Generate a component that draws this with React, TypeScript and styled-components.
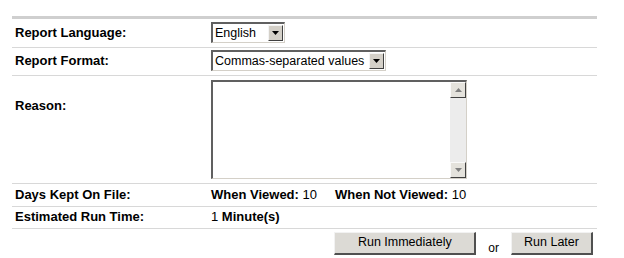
import React from "react";
import styled, { createGlobalStyle } from "styled-components";

const Global = createGlobalStyle`
  html, body { margin: 0; padding: 0; background: #fff; }
  body { font-family: "Liberation Sans", Arial, sans-serif; color: #000; }
`;

const Page = styled.div`
  padding: 16px 27px 0 12px;
  width: 585px;
`;

const Form = styled.div`
  border-top: 3px solid #cfcfcf;
`;

const Row = styled.div<{ $h: number; $top?: boolean }>`
  display: grid;
  grid-template-columns: 199px 1fr;
  align-items: ${(p) => (p.$top ? "start" : "center")};
  height: ${(p) => p.$h}px;
  box-sizing: border-box;
  border-bottom: 1px solid #d8d8d8;
  padding-bottom: ${(p) => (p.$top ? 0 : 2)}px;
`;

const Label = styled.div<{ $pt?: number }>`
  padding-left: 3px;
  padding-top: ${(p) => p.$pt ?? 0}px;
  font-size: 13px;
  font-weight: bold;
  white-space: nowrap;
`;

const Value = styled.div`
  font-size: 13px;
  display: flex;
  align-items: center;
  white-space: nowrap;
`;

const Select = styled.div<{ $w: number }>`
  width: ${(p) => p.$w}px;
  height: 21px;
  box-sizing: border-box;
  border-top: 2px solid #606060;
  border-left: 2px solid #606060;
  border-right: 1px solid #d4d0c8;
  border-bottom: 1px solid #d4d0c8;
  display: flex;
  align-items: center;
  justify-content: space-between;
  font-size: 12.5px;
  padding-left: 2px;
  background: #fff;
  white-space: nowrap;
  overflow: hidden;
`;

const ArrowBtn = styled.div`
  flex: none;
  width: 15px;
  height: 16px;
  margin-right: 1px;
  box-sizing: border-box;
  background: #d4d0c8;
  border-top: 1px solid #f4f4f4;
  border-left: 1px solid #f4f4f4;
  border-right: 1px solid #404040;
  border-bottom: 1px solid #404040;
  display: flex;
  align-items: center;
  justify-content: center;
`;

const TextArea = styled.div`
  margin-top: 4px;
  width: 256px;
  height: 99px;
  box-sizing: border-box;
  border-top: 2px solid #606060;
  border-left: 2px solid #606060;
  border-right: 1px solid #d4d0c8;
  border-bottom: 1px solid #d4d0c8;
  display: flex;
  justify-content: flex-end;
  background: #fff;
`;

const ScrollBar = styled.div`
  width: 16px;
  display: flex;
  flex-direction: column;
  justify-content: space-between;
  background-color: #ececec;
  background-image: radial-gradient(#fff 0.6px, transparent 0.7px);
  background-size: 2px 2px;
`;

const ScrollBtn = styled.div`
  width: 16px;
  height: 16px;
  box-sizing: border-box;
  background: #e4e2dc;
  border-top: 1px solid #fafafa;
  border-left: 1px solid #fafafa;
  border-right: 1px solid #404040;
  border-bottom: 1px solid #404040;
  display: flex;
  align-items: center;
  justify-content: center;
`;

const Strong = styled.b`
  font-weight: bold;
`;

const Pair = styled.span`
  margin-right: 18px;
`;

const Actions = styled.div`
  display: flex;
  justify-content: flex-end;
  align-items: center;
  padding-top: 3px;
  padding-right: 4px;
`;

const Button = styled.div<{ $w: number }>`
  width: ${(p) => p.$w}px;
  height: 23px;
  box-sizing: border-box;
  background: #dcdad5;
  border-top: 1px solid #f2f2f2;
  border-left: 1px solid #f2f2f2;
  border-right: 2px solid #505050;
  border-bottom: 2px solid #505050;
  font-size: 12.5px;
  display: flex;
  align-items: center;
  justify-content: center;
  padding-bottom: 2px;
`;

const Or = styled.span`
  font-size: 12px;
  margin: 8px 12px 0 12px;
`;

const Down = () => (
  <svg width="7" height="4" viewBox="0 0 7 4">
    <path d="M0 0H7L3.5 4Z" fill="#000" />
  </svg>
);

const Tri = ({ up }: { up?: boolean }) => (
  <svg width="7" height="4" viewBox="0 0 7 4">
    <path d={up ? "M0 4H7L3.5 0Z" : "M0 0H7L3.5 4Z"} fill="#808080" />
  </svg>
);

export default function App() {
  return (
    <>
      <Global />
      <Page>
        <Form>
          <Row $h={29}>
            <Label>Report Language:</Label>
            <Value>
              <Select $w={74}>
                English
                <ArrowBtn>
                  <Down />
                </ArrowBtn>
              </Select>
            </Value>
          </Row>
          <Row $h={28}>
            <Label>Report Format:</Label>
            <Value>
              <Select $w={175}>
                Commas-separated values
                <ArrowBtn>
                  <Down />
                </ArrowBtn>
              </Select>
            </Value>
          </Row>
          <Row $h={108} $top>
            <Label $pt={22}>Reason:</Label>
            <Value>
              <TextArea>
                <ScrollBar>
                  <ScrollBtn>
                    <Tri up />
                  </ScrollBtn>
                  <ScrollBtn>
                    <Tri />
                  </ScrollBtn>
                </ScrollBar>
              </TextArea>
            </Value>
          </Row>
          <Row $h={23}>
            <Label>Days Kept On File:</Label>
            <Value>
              <Pair>
                <Strong>When Viewed:</Strong> 10
              </Pair>
              <Pair>
                <Strong>When Not Viewed:</Strong> 10
              </Pair>
            </Value>
          </Row>
          <Row $h={22}>
            <Label>Estimated Run Time:</Label>
            <Value>
              1&nbsp;<Strong>Minute(s)</Strong>
            </Value>
          </Row>
        </Form>
        <Actions>
          <Button $w={142}>Run Immediately</Button>
          <Or>or</Or>
          <Button $w={82}>Run Later</Button>
        </Actions>
      </Page>
    </>
  );
}
